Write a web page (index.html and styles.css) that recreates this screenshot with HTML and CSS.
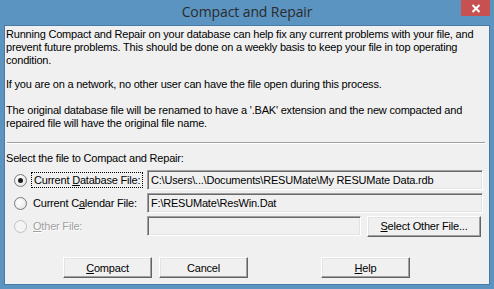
FILE: index.html
```html
<!DOCTYPE html>
<html>
<head>
<meta charset="utf-8">
<link rel="stylesheet" href="styles.css">
</head>
<body>
<div class="window">
  <div class="titlebar">
    <div></div>
    <div class="title">Compact and Repair</div>
    <div class="close"><svg width="10" height="9" viewBox="0 0 10 9"><path d="M1.5 1 L8.5 8 M8.5 1 L1.5 8" stroke="#fff" stroke-width="2" fill="none"/></svg></div>
  </div>
  <div class="client">
    <div class="intro">
      <p>Running Compact and Repair on your database can help fix any current problems with your file, and prevent future problems. This should be done on a weekly basis to keep your file in top operating condition.</p>
      <p class="p2">If you are on a network, no other user can have the file open during this process.</p>
      <p class="p3">The original database file will be renamed to have a '.BAK' extension and the new compacted and repaired file will have the original file name.</p>
    </div>
    <div class="sep"></div>
    <div class="select-label">Select the file to Compact and Repair:</div>
    <div class="rows">
      <div class="radio checked"></div>
      <div class="label"><span class="focus">Current <u>D</u>atabase File:</span></div>
      <div class="field wide">C:\Users\...\Documents\RESUMate\My RESUMate Data.rdb</div>

      <div class="radio"></div>
      <div class="label">Current C<u>a</u>lendar File:</div>
      <div class="field wide">F:\RESUMate\ResWin.Dat</div>

      <div class="radio disabled"></div>
      <div class="label disabled-text"><u>O</u>ther File:</div>
      <div class="field-row">
        <div class="field short"></div>
        <div class="btn other"><u>S</u>elect Other File...</div>
      </div>
    </div>
    <div class="buttons">
      <div class="btn main"><u>C</u>ompact</div>
      <div class="btn main cancel">Cancel</div>
      <div class="btn main help"><u>H</u>elp</div>
    </div>
  </div>
</div>
</body>
</html>
```
FILE: styles.css
```css
html, body {
  margin: 0;
  padding: 0;
  background: #5b93c1;
}
.window {
  width: 494px;
  height: 289px;
  background: #5b93c1;
  font-family: "Liberation Sans", Arial, sans-serif;
  font-size: 11px;
  color: #000;
  overflow: hidden;
}
.titlebar {
  height: 25px;
  display: grid;
  grid-template-columns: 1fr auto 1fr;
}
.title {
  font-family: "Open Sans", "Noto Sans", sans-serif;
  font-size: 14px;
  color: #2b2b2b;
  line-height: 23px;
  letter-spacing: -0.1px;
}
.close {
  justify-self: end;
  align-self: start;
  width: 29px;
  height: 16px;
  margin-right: 4px;
  background: #c75050;
  display: flex;
  align-items: center;
  justify-content: center;
}
.close svg { display: block; }
.client {
  margin: 0 4px;
  height: 258px;
  border: 1px solid #4a7ba6;
  background: #f0f0f0;
}
.intro {
  padding: 2px 0 0 1px;
  line-height: 13px;
  letter-spacing: -0.2px;
}
.intro p { margin: 0; }
.intro .p2 { margin-top: 11px; }
.intro .p3 { margin-top: 13px; }
.sep {
  margin: 12px 4px 0 2px;
  height: 1px;
  background: #a0a0a0;
  border-bottom: 1px solid #fff;
}
.select-label {
  margin: 8px 0 0 1px;
  line-height: 13px;
  letter-spacing: -0.2px;
}
.rows {
  margin-top: 5px;
  display: grid;
  grid-template-columns: 23px 119px 336px;
  grid-auto-rows: 20px;
  row-gap: 3px;
  align-items: center;
  letter-spacing: -0.2px;
}
.radio {
  justify-self: end;
  margin-right: 1px;
  width: 11px;
  height: 11px;
  border-radius: 50%;
  border: 1px solid #7b7b7b;
  background: radial-gradient(circle at 40% 40%, #ffffff 0%, #f2f2f2 45%, #d8d8d8 100%);
  position: relative;
}
.radio.checked::after {
  content: "";
  position: absolute;
  left: 3px;
  top: 3px;
  width: 5px;
  height: 5px;
  border-radius: 50%;
  background: #1a1a1a;
}
.radio.disabled {
  border-color: #c0c0c0;
  background: #f4f4f4;
}
.label {
  padding-left: 5px;
}
.focus {
  outline: 1px dotted #000;
  outline-offset: 1px;
  padding: 0 1px;
}
.disabled-text {
  color: #a0a0a0;
  text-shadow: 1px 1px 0 #fff;
}
.field {
  height: 20px;
  box-sizing: border-box;
  border: 1px solid;
  border-color: #a0a0a0 #fff #fff #a0a0a0;
  box-shadow: inset 1px 1px 0 #696969, inset -1px -1px 0 #e3e3e3;
  background: #f0f0f0;
  padding: 0 3px;
  line-height: 18px;
  white-space: nowrap;
  overflow: hidden;
}
.field-row {
  display: flex;
  align-items: center;
  gap: 6px;
}
.field.short { width: 214px; }
.btn {
  box-sizing: border-box;
  height: 21px;
  border: 1px solid;
  border-color: #fff #646464 #646464 #fff;
  box-shadow: inset -1px -1px 0 #a0a0a0, inset 1px 1px 0 #e3e3e3;
  background: #f0f0f0;
  display: flex;
  align-items: center;
  justify-content: center;
  letter-spacing: -0.2px;
}
.btn.other { width: 114px; }
.buttons {
  margin: 21px 0 0 58px;
  display: flex;
}
.btn.main { width: 89px; }
.btn.cancel { margin-left: 7px; }
.btn.help { margin-left: 73px; }
```
